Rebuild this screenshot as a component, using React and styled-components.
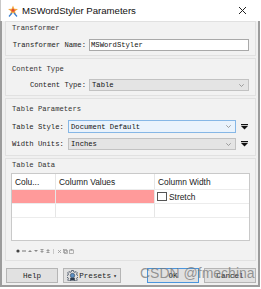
import React from 'react';
import styled, { createGlobalStyle } from 'styled-components';

const GlobalStyle = createGlobalStyle`
  html, body { margin: 0; padding: 0; background: #fff; }
`;

const mono = `"Liberation Mono", "DejaVu Sans Mono", monospace`;
const sans = `"Liberation Sans", Arial, sans-serif`;

export default function App() {
  return (
    <Window>
      <GlobalStyle />
      <TitleBar>
        <AppIcon />
        <Title>MSWordStyler Parameters</Title>
        <Close>
          <svg width="9" height="9" viewBox="0 0 9 9">
            <path d="M1 1 L8 8 M8 1 L1 8" stroke="#222" strokeWidth="1" />
          </svg>
        </Close>
      </TitleBar>

      <Frame>
        <Group $pt={1} $pb={4}>
          <GroupTitle>Transformer</GroupTitle>
          <Row $mt={6}>
            <Label $w={74}>Transformer Name:</Label>
            <TextInput>MSWordStyler</TextInput>
          </Row>
        </Group>

        <Group $pt={5} $pb={4}>
          <GroupTitle>Content Type</GroupTitle>
          <Row $mt={5}>
            <Label $w={74}>Content Type:</Label>
            <Select>Table<Chevron /></Select>
          </Row>
        </Group>

        <Group $pt={5} $pb={5}>
          <GroupTitle>Table Parameters</GroupTitle>
          <Row $mt={6}>
            <Label $w={53} $left>Table Style:</Label>
            <Select $focus $h={13}>Document Default<Chevron /></Select>
            <MenuArrow />
          </Row>
          <Row $mt={5}>
            <Label $w={53} $left>Width Units:</Label>
            <Select>Inches<Chevron /></Select>
            <MenuArrow />
          </Row>
        </Group>

        <Group $pt={1} $pb={4} $grow>
          <GroupTitle>Table Data</GroupTitle>
          <Table>
            <HeadRow>
              <Cell $w={44}>Colu...</Cell>
              <Cell $w={99}>Column Values</Cell>
              <Cell $last>Column Width</Cell>
            </HeadRow>
            <BodyRow $red>
              <Cell $w={44} />
              <Cell $w={99} />
              <Cell $last $white>
                <Check />
                Stretch
              </Cell>
            </BodyRow>
            <BodyRow>
              <Cell $w={44} />
              <Cell $w={99} />
              <Cell $last />
            </BodyRow>
          </Table>
          <Tools>
            <Tool><svg width="4" height="4"><circle cx="2" cy="2" r="1.6" fill="#444" /></svg></Tool>
            <Tool><svg width="4" height="4"><rect x="0" y="1.5" width="4" height="1" fill="#777" /></svg></Tool>
            <Tool><svg width="4" height="4"><path d="M0 3 L2 1 L4 3Z" fill="#888" /></svg></Tool>
            <Tool><svg width="4" height="4"><path d="M0 1 L2 3 L4 1Z" fill="#888" /></svg></Tool>
            <Tool><svg width="4" height="4"><path d="M0 0 L2 2 L4 0Z M0 2 L2 4 L4 2Z" fill="#999" /></svg></Tool>
            <Tool><svg width="4" height="4"><path d="M0 4 L2 2 L4 4Z M0 2 L2 0 L4 2Z" fill="#999" /></svg></Tool>
            <Sep />
            <Tool><svg width="5" height="5"><path d="M1 1 L4 4 M4 1 L1 4" stroke="#999" strokeWidth="0.8" /></svg></Tool>
            <Tool><svg width="5" height="5"><rect x="0.5" y="0.5" width="3" height="3" fill="none" stroke="#999" strokeWidth="0.7" /><rect x="1.5" y="1.5" width="3" height="3" fill="none" stroke="#999" strokeWidth="0.7" /></svg></Tool>
            <Tool><svg width="5" height="5"><rect x="0.5" y="1" width="4" height="3.5" fill="none" stroke="#999" strokeWidth="0.7" /><rect x="1.5" y="0" width="2" height="1.5" fill="#999" /></svg></Tool>
          </Tools>
        </Group>

        <Buttons>
          <Button $w={52}>Help</Button>
          <Button $w={58}>
            <GearIcon />
            Presets
            <Caret>▾</Caret>
          </Button>
          <Spacer />
          <Button $w={52} $primary>OK</Button>
          <Button $w={52}>Cancel</Button>
        </Buttons>
      </Frame>

      <Watermark>CSDN @fmechina</Watermark>
    </Window>
  );
}

function AppIcon() {
  return (
    <svg width="12" height="12" viewBox="0 0 12 12">
      <path d="M6 0.5 L7.3 3.8 L11 4 L8 6.2 L9 10 L6 7.8 L3 10 L4 6.2 L1 4 L4.7 3.8Z" fill="#f3a43a" />
      <circle cx="6" cy="5.2" r="1.5" fill="#e0453a" />
      <path d="M2 11.5 L5 8 M10 11.5 L7 8" stroke="#3b7fd0" strokeWidth="1.2" />
    </svg>
  );
}

function Chevron() {
  return (
    <ChevronBox>
      <svg width="5" height="3" viewBox="0 0 5 3">
        <path d="M0.3 0.3 L2.5 2.5 L4.7 0.3" fill="none" stroke="#888" strokeWidth="0.8" />
      </svg>
    </ChevronBox>
  );
}

function MenuArrow() {
  return (
    <ArrowBox>
      <svg width="7" height="6" viewBox="0 0 7 6">
        <rect x="0" y="0" width="7" height="1.2" fill="#111" />
        <path d="M0 2 L7 2 L3.5 5.5Z" fill="#111" />
      </svg>
    </ArrowBox>
  );
}

function GearIcon() {
  return (
    <svg width="11" height="11" viewBox="0 0 12 12" style={{ marginRight: 1 }}>
      <path
        d="M5 0.5h2l0.3 1.5 1.3 0.6 1.3-0.9 1.4 1.4-0.9 1.3 0.6 1.3 1.5 0.3v2l-1.5 0.3-0.6 1.3 0.9 1.3-1.4 1.4-1.3-0.9-1.3 0.6-0.3 1.5h-2l-0.3-1.5-1.3-0.6-1.3 0.9-1.4-1.4 0.9-1.3-0.6-1.3-1.5-0.3v-2l1.5-0.3 0.6-1.3-0.9-1.3 1.4-1.4 1.3 0.9 1.3-0.6z"
        fill="none"
        stroke="#3d4a5c"
        strokeWidth="0.9"
      />
      <circle cx="6" cy="6" r="2.4" fill="#5b8fc4" stroke="#2c3a4d" strokeWidth="0.6" />
      <rect x="3.5" y="8.5" width="5" height="3" fill="#2c3a4d" />
    </svg>
  );
}

const Window = styled.div`
  position: relative;
  width: 261px;
  height: 289px;
  box-sizing: border-box;
  padding: 0 1px 2px 0;
  display: flex;
  flex-direction: column;
  background: #fff;
  overflow: hidden;
`;

const TitleBar = styled.div`
  height: 21px;
  display: flex;
  align-items: center;
  padding-left: 6px;
  border-left: 1px solid #c8c8c8;
  background: #fff;
`;

const Title = styled.div`
  margin-left: 3px;
  font-family: ${sans};
  font-size: 9.6px;
  color: #111;
`;

const Close = styled.div`
  margin-left: auto;
  width: 26px;
  display: flex;
  justify-content: center;
  padding-right: 5px;
`;

const Frame = styled.div`
  flex: 1;
  display: flex;
  flex-direction: column;
  gap: 2px;
  background: #f0f0f0;
  border: 2px solid #9c9c9c;
  border-top: none;
  padding: 0 2px 2px 3px;
`;

const Group = styled.div`
  display: flex;
  flex-direction: column;
  border: 1px solid #e1e1e1;
  background: #f2f2f2;
  padding: ${(p) => p.$pt}px 5px ${(p) => p.$pb}px 5px;
  flex: ${(p) => (p.$grow ? 1 : 'none')};
`;

const GroupTitle = styled.div`
  font-family: ${mono};
  font-size: 7.2px;
  line-height: 10px;
  height: 10px;
  color: #333;
  padding-left: 1px;
`;

const Row = styled.div`
  display: flex;
  align-items: center;
  margin-top: ${(p) => p.$mt}px;
`;

const Label = styled.div`
  width: ${(p) => p.$w}px;
  flex: none;
  text-align: ${(p) => (p.$left ? 'left' : 'right')};
  font-family: ${mono};
  font-size: 7.2px;
  color: #222;
  padding-left: 1px;
  margin-right: 3px;
`;

const TextInput = styled.div`
  flex: 1;
  height: 12px;
  box-sizing: border-box;
  border: 1px solid #a9a9a9;
  background: #fff;
  font-family: ${mono};
  font-size: 7.2px;
  line-height: 10px;
  padding-left: 1px;
  color: #111;
  margin-right: 1px;
`;

const Select = styled.div`
  flex: 1;
  position: relative;
  height: ${(p) => p.$h || 12}px;
  box-sizing: border-box;
  display: flex;
  align-items: center;
  border: 1px solid ${(p) => (p.$focus ? '#86b7e6' : '#c2c2c2')};
  background: ${(p) => (p.$focus ? '#eaf3fc' : '#e4e4e4')};
  font-family: ${mono};
  font-size: 7.2px;
  padding-left: 2px;
  color: #111;
  margin-right: 1px;
`;

const ChevronBox = styled.span`
  margin-left: auto;
  display: flex;
  padding-right: 4px;
`;

const ArrowBox = styled.div`
  width: 12px;
  display: flex;
  justify-content: center;
  margin-left: 1px;
`;

const Table = styled.div`
  margin-top: 3px;
  height: 68px;
  box-sizing: border-box;
  border: 1px solid #c9c9c9;
  background: #fff;
`;

const HeadRow = styled.div`
  display: flex;
  height: 15px;
  border-bottom: 1px solid #ececec;
`;

const BodyRow = styled.div`
  display: flex;
  height: 13px;
  border-bottom: 1px solid #ececec;
  background: ${(p) => (p.$red ? '#ff9a9a' : '#fff')};
`;

const Cell = styled.div`
  width: ${(p) => (p.$w ? `${p.$w}px` : 'auto')};
  flex: ${(p) => (p.$last ? 1 : 'none')};
  display: flex;
  align-items: center;
  gap: 2px;
  box-sizing: border-box;
  padding-left: 3px;
  border-right: ${(p) => (p.$last ? 'none' : '1px solid #e6e6e6')};
  background: ${(p) => (p.$white ? '#fff' : 'transparent')};
  font-family: ${sans};
  font-size: 8.4px;
  color: #222;
  white-space: nowrap;
`;

const Check = styled.span`
  width: 10px;
  height: 9px;
  box-sizing: border-box;
  border: 1px solid #555;
  background: #fff;
  margin-left: -1px;
`;

const Tools = styled.div`
  display: flex;
  align-items: center;
  gap: 1px;
  margin-top: 7px;
  padding-left: 4px;
  height: 6px;
`;

const Tool = styled.span`
  width: 5px;
  display: flex;
  justify-content: center;
`;

const Sep = styled.span`
  width: 1px;
  height: 5px;
  background: #c8c8c8;
  margin: 0 2px;
`;

const Buttons = styled.div`
  display: flex;
  gap: 5px;
  align-items: center;
  padding: 5px 0 0 1px;
  height: 15px;
`;

const Spacer = styled.div`
  flex: 1;
`;

const Button = styled.div`
  width: ${(p) => p.$w}px;
  height: 15px;
  box-sizing: border-box;
  display: flex;
  align-items: center;
  justify-content: center;
  border: 1px solid ${(p) => (p.$primary ? '#4b95dc' : '#b5b5b5')};
  background: #e1e1e1;
  font-family: ${mono};
  font-size: 7.6px;
  color: #222;
`;

const Caret = styled.span`
  font-size: 6px;
  margin-left: 2px;
`;

const Watermark = styled.div`
  position: absolute;
  left: 140px;
  top: 265px;
  font-family: ${sans};
  font-size: 14px;
  color: rgba(120, 120, 120, 0.75);
  pointer-events: none;
  white-space: nowrap;
`;
